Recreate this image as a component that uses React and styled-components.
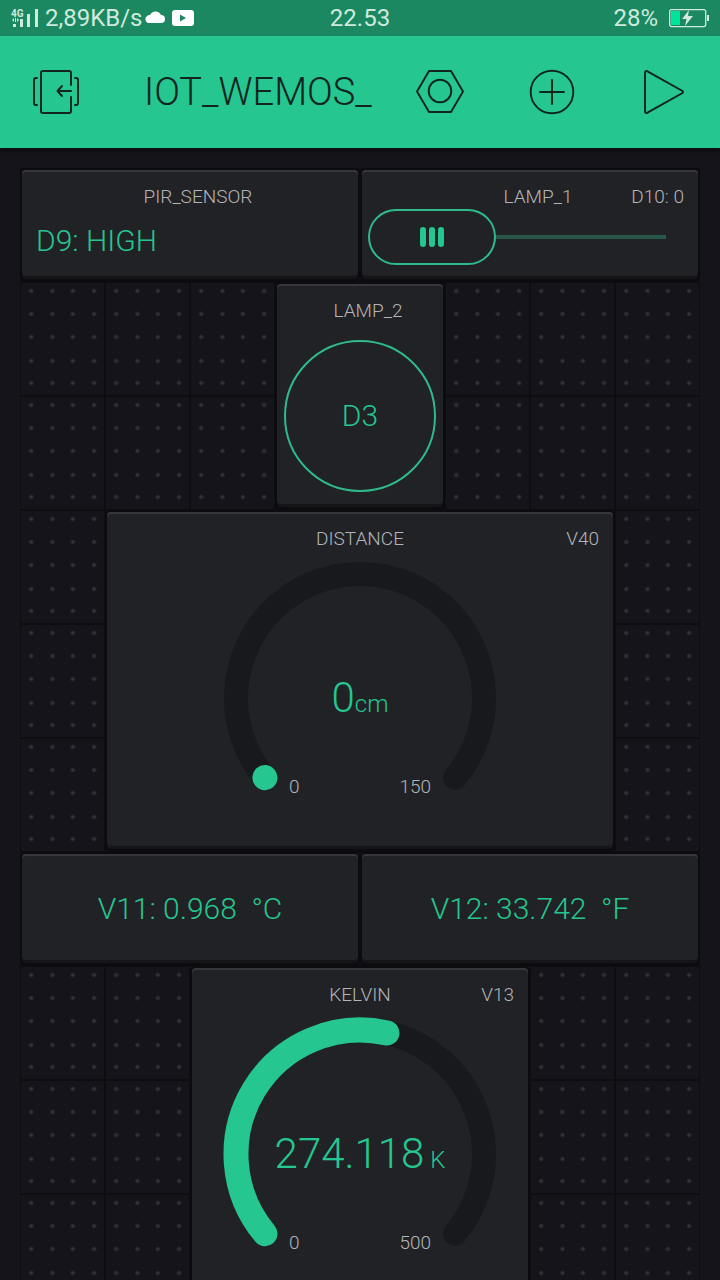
import React, { useState } from "react";
import styled, { createGlobalStyle, css } from "styled-components";

const GREEN = "#25c68f";
const INK = "#12241e";
const CELL_HEIGHT = 114;

/* ---------- page ---------- */

const GlobalStyle = createGlobalStyle`
  *, *::before, *::after { box-sizing: border-box; }
  body {
    margin: 0;
    background: #14141a;
    font-family: Roboto, "Liberation Sans", sans-serif;
    font-weight: 300;
  }
  button, input { font: inherit; }
`;

const Screen = styled.div`
  display: flex;
  flex-direction: column;
  height: 100vh;
  overflow: hidden;
`;

/* ---------- status bar ---------- */

const StatusBar = styled.div`
  display: grid;
  grid-template-columns: 1fr auto 1fr;
  align-items: center;
  flex: none;
  height: 36px;
  padding: 0 11px;
  background: #1b8861;
  color: #cfeadd;
  font-size: 24px;
  font-weight: 400;
  line-height: 36px;
`;

const StatusGroup = styled.div`
  display: flex;
  align-items: center;
  justify-content: ${(p) => (p.$end ? "flex-end" : "flex-start")};
  gap: ${(p) => p.$gap}px;
`;

const StatusIcon = styled.svg`
  display: block;
  flex: none;
`;

/* ---------- app bar ---------- */

const AppBar = styled.header`
  position: relative;
  display: flex;
  align-items: center;
  flex: none;
  height: 112px;
  background: ${GREEN};
  color: ${INK};
  box-shadow: 0 4px 4px #0e0e12;
`;

const AppTitle = styled.h1`
  flex: 1;
  min-width: 0;
  margin: 0;
  padding-left: 32px;
  overflow: hidden;
  font-size: 38px;
  font-weight: 300;
  line-height: 48px;
  white-space: nowrap;
`;

const BarButton = styled.button`
  display: grid;
  place-items: center;
  flex: none;
  width: 112px;
  height: 112px;
  padding: 0;
  border: 0;
  background: none;
  color: inherit;
  cursor: pointer;
`;

const LineIcon = styled.svg`
  display: block;
  width: 48px;
  height: 48px;
  fill: none;
  stroke: currentColor;
  stroke-width: 1.9;
  stroke-linecap: round;
  stroke-linejoin: round;
`;

/* ---------- widget board ---------- */

const dotColumns = ["12%", "37%", "61%", "86%"];
const dotRows = [8, 31, 54, 78, 100];
const dots = dotRows
  .flatMap((y) =>
    dotColumns.map(
      (x) => `radial-gradient(circle at ${x} ${y}px, #303036 1px, transparent 3px)`
    )
  )
  .join(", ");

const BoardScroller = styled.main`
  flex: 1;
  min-height: 0;
  padding: 20px;
  overflow-y: auto;
  scrollbar-width: none;
`;

const Board = styled.div`
  display: grid;
  grid-template-columns: repeat(8, 1fr);
  grid-auto-rows: ${CELL_HEIGHT}px;
  background-image: ${dots},
    linear-gradient(to left, #0e0e12 2px, transparent 2px),
    linear-gradient(to top, #0e0e12 2px, transparent 2px);
  background-position: 1px 1px;
  background-size: 12.5% ${CELL_HEIGHT}px;
`;

const Card = styled.section`
  display: flex;
  flex-direction: column;
  grid-column: ${(p) => p.$col} / span ${(p) => p.$span};
  grid-row: span ${(p) => p.$rows || 1};
  margin: 2px 2px 6px;
  border-radius: 4px;
  background: #212226;
  box-shadow: inset 0 2px 0 #36373b, 0 3px 0 #151518, 0 0 0 2px #0c0c10,
    0 4px 0 2px #0c0c10;
`;

const CardHeader = styled.div`
  display: grid;
  grid-template-columns: 1fr auto 1fr;
  flex: none;
  padding: 15px 14px 0 ${(p) => (p.$inset ? 30 : 14)}px;
  color: #b4b5b8;
  font-size: 19px;
  line-height: 24px;
  white-space: nowrap;
`;

const CardTitle = styled.h2`
  grid-column: 2;
  margin: 0;
  font-size: inherit;
  font-weight: inherit;
`;

const Pin = styled.span`
  grid-column: 3;
  justify-self: end;
`;

const Value = styled.p`
  margin: 0;
  color: ${GREEN};
  font-size: 30px;
  line-height: 36px;
  white-space: pre;
  ${(p) =>
    p.$centered
      ? css`
          margin: auto;
          padding-top: 4px;
        `
      : css`
          padding: 14px 14px 0;
        `}
`;

/* ---------- slider ---------- */

const SliderBox = styled.div`
  position: relative;
  margin: 0 30px 0 6px;
`;

const SliderInput = styled.input`
  display: block;
  appearance: none;
  width: 100%;
  height: 56px;
  margin: 0;
  background: none;
  cursor: pointer;

  &::-webkit-slider-runnable-track {
    height: 56px;
    background: linear-gradient(#29574a, #29574a) center / calc(100% - 4px) 4px no-repeat;
  }

  &::-webkit-slider-thumb {
    appearance: none;
    width: 128px;
    height: 56px;
    border: 2px solid #2fba8b;
    border-radius: 28px;
    background: #212226;
  }
`;

const Grip = styled.span`
  position: absolute;
  top: 0;
  display: flex;
  align-items: center;
  justify-content: center;
  gap: 3px;
  width: 128px;
  height: 56px;
  pointer-events: none;
`;

const GripBar = styled.i`
  width: 6px;
  height: 20px;
  border-radius: 3px;
  background: ${GREEN};
`;

function Slider({ label }) {
  const [value, setValue] = useState(0);
  return (
    <SliderBox>
      <SliderInput
        type="range"
        min="0"
        max="255"
        aria-label={label}
        value={value}
        onChange={(e) => setValue(Number(e.target.value))}
      />
      <Grip style={{ left: `calc((100% - 128px) * ${value / 255})` }}>
        <GripBar />
        <GripBar />
        <GripBar />
      </Grip>
    </SliderBox>
  );
}

/* ---------- round button ---------- */

const RoundButton = styled.button`
  align-self: center;
  width: 152px;
  height: 152px;
  margin-top: 17px;
  padding: 0;
  border: 2px solid #2fba8b;
  border-radius: 50%;
  background: none;
  color: ${GREEN};
  font-size: 30px;
  line-height: 36px;
  cursor: pointer;
`;

/* ---------- gauge ---------- */

const Dial = styled.div`
  display: grid;
  align-self: center;
  width: 274px;
  height: 274px;
  margin-top: 10px;

  > * {
    grid-area: 1 / 1;
  }
`;

const DialArcs = styled.svg`
  display: block;
  width: 100%;
  height: 100%;
  fill: none;
  stroke-linecap: round;
`;

const Reading = styled.p`
  place-self: center;
  margin: 0;
  padding-top: 6px;
  color: ${GREEN};
  font-size: 42px;
  line-height: 52px;
  white-space: pre;
`;

const Unit = styled.span`
  font-size: 24px;
`;

const Scale = styled.div`
  display: flex;
  align-self: end;
  justify-content: space-between;
  padding: 0 66px 36px;
  color: #b4b5b8;
  font-size: 19px;
  line-height: 24px;
`;

const START = 230;
const SWEEP = 260;

function arcPoint(bearing) {
  const a = (bearing * Math.PI) / 180;
  return `${137 + 124 * Math.sin(a)} ${137 - 124 * Math.cos(a)}`;
}

function arc(fraction) {
  const sweep = SWEEP * fraction;
  return `M${arcPoint(START)}A124 124 0 ${sweep > 180 ? 1 : 0} 1 ${arcPoint(START + sweep)}`;
}

function Gauge({ value, text, unit, max }) {
  return (
    <Dial>
      <DialArcs viewBox="0 0 274 274" aria-hidden="true">
        <path d={arc(1)} stroke="#18191c" strokeWidth="24" />
        <path d={arc(Math.max(value / max, 0.0005))} stroke={GREEN} strokeWidth="25" />
      </DialArcs>
      <Reading>
        {text}
        <Unit>{unit}</Unit>
      </Reading>
      <Scale>
        <span>0</span>
        <span>{max}</span>
      </Scale>
    </Dial>
  );
}

/* ---------- app ---------- */

export default function App() {
  return (
    <Screen>
      <GlobalStyle />

      <StatusBar>
        <StatusGroup $gap={2}>
          <StatusIcon width="32" height="36" viewBox="0 0 32 36" fill="currentColor">
            <text x="0" y="17" fontSize="10" fontWeight="700">4G</text>
            <path d="M2 24h3v3H2zM9 19h3v8H9zM16 14h3v13h-3zM24 9h3v18h-3z" />
            <path d="M1 20l2-2v4zM4 18h1v4H4zM6 22V18l2 2z" />
          </StatusIcon>
          <span>2,89KB/s</span>
          <StatusIcon width="50" height="36" viewBox="0 0 50 36" fill="#fff">
            <path d="M3 23a4 4 0 0 1-1-7a4 4 0 0 1 3-1a6 6 0 0 1 11 0a4 4 0 0 1 0 8z" />
            <rect x="27" y="10" width="22" height="16" rx="3" />
            <path d="M35 14.500l6 3.500-6 3.500z" fill="#1b8861" />
          </StatusIcon>
        </StatusGroup>
        <span>22.53</span>
        <StatusGroup $end $gap={10}>
          <span>28%</span>
          <StatusIcon width="41" height="36" viewBox="0 0 41 36" fill="currentColor">
            <rect x="1.700" y="9.600" width="36" height="17" rx="2" fill="none" stroke="currentColor" strokeWidth="1.300" />
            <rect x="3" y="11" width="9" height="14" fill="#00e39a" />
            <path d="M39 15h2v6h-2zM21 10l-7 9h4.500l-1.500 7 8-10h-5z" />
          </StatusIcon>
        </StatusGroup>
      </StatusBar>

      <AppBar>
        <BarButton aria-label="Exit project">
          <LineIcon viewBox="0 0 48 48">
            <path d="M39 17V5a2 2 0 0 0-2-2H11a2 2 0 0 0-2 2v38a2 2 0 0 0 2 2h26a2 2 0 0 0 2-2V29" />
            <path d="M39 23H25.500M30 18l-4.500 5 4.500 5" />
            <path d="M5 10H4a2 2 0 0 0-2 2v23a2 2 0 0 0 2 2h1M43 10h1a2 2 0 0 1 2 2v23a2 2 0 0 1-2 2h-1" />
          </LineIcon>
        </BarButton>
        <AppTitle>IOT_WEMOS_</AppTitle>
        <BarButton aria-label="Project settings">
          <LineIcon viewBox="0 0 48 48">
            <path d="M13 3h22l12 20.500L35 44H13L1 23.500z" />
            <circle cx="24" cy="23" r="11.300" />
          </LineIcon>
        </BarButton>
        <BarButton aria-label="Add widget">
          <LineIcon viewBox="0 0 48 48">
            <circle cx="24" cy="24" r="21.300" />
            <path d="M24 12v24M12 24h24" />
          </LineIcon>
        </BarButton>
        <BarButton aria-label="Run project">
          <LineIcon viewBox="0 0 48 48">
            <path d="M5 4.500a1.500 1.500 0 0 1 2.500-1.200L42.500 23a1.200 1.200 0 0 1 0 2L7.500 44.700A1.500 1.500 0 0 1 5 43.500z" />
          </LineIcon>
        </BarButton>
      </AppBar>

      <BoardScroller>
        <Board>
          <Card $col={1} $span={4}>
            <CardHeader $inset>
              <CardTitle>PIR_SENSOR</CardTitle>
            </CardHeader>
            <Value>D9: HIGH</Value>
          </Card>

          <Card $col={5} $span={4}>
            <CardHeader $inset>
              <CardTitle>LAMP_1</CardTitle>
              <Pin>D10: 0</Pin>
            </CardHeader>
            <Slider label="LAMP_1" />
          </Card>

          <Card $col={4} $span={2} $rows={2}>
            <CardHeader $inset>
              <CardTitle>LAMP_2</CardTitle>
            </CardHeader>
            <RoundButton>D3</RoundButton>
          </Card>

          <Card $col={2} $span={6} $rows={3}>
            <CardHeader>
              <CardTitle>DISTANCE</CardTitle>
              <Pin>V40</Pin>
            </CardHeader>
            <Gauge value={0} text="0" unit="cm" max={150} />
          </Card>

          <Card $col={1} $span={4}>
            <Value $centered>{"V11: 0.968  °C"}</Value>
          </Card>

          <Card $col={5} $span={4}>
            <Value $centered>{"V12: 33.742  °F"}</Value>
          </Card>

          <Card $col={3} $span={4} $rows={3}>
            <CardHeader>
              <CardTitle>KELVIN</CardTitle>
              <Pin>V13</Pin>
            </CardHeader>
            <Gauge value={274.118} text="274.118" unit=" K" max={500} />
          </Card>
        </Board>
      </BoardScroller>
    </Screen>
  );
}
